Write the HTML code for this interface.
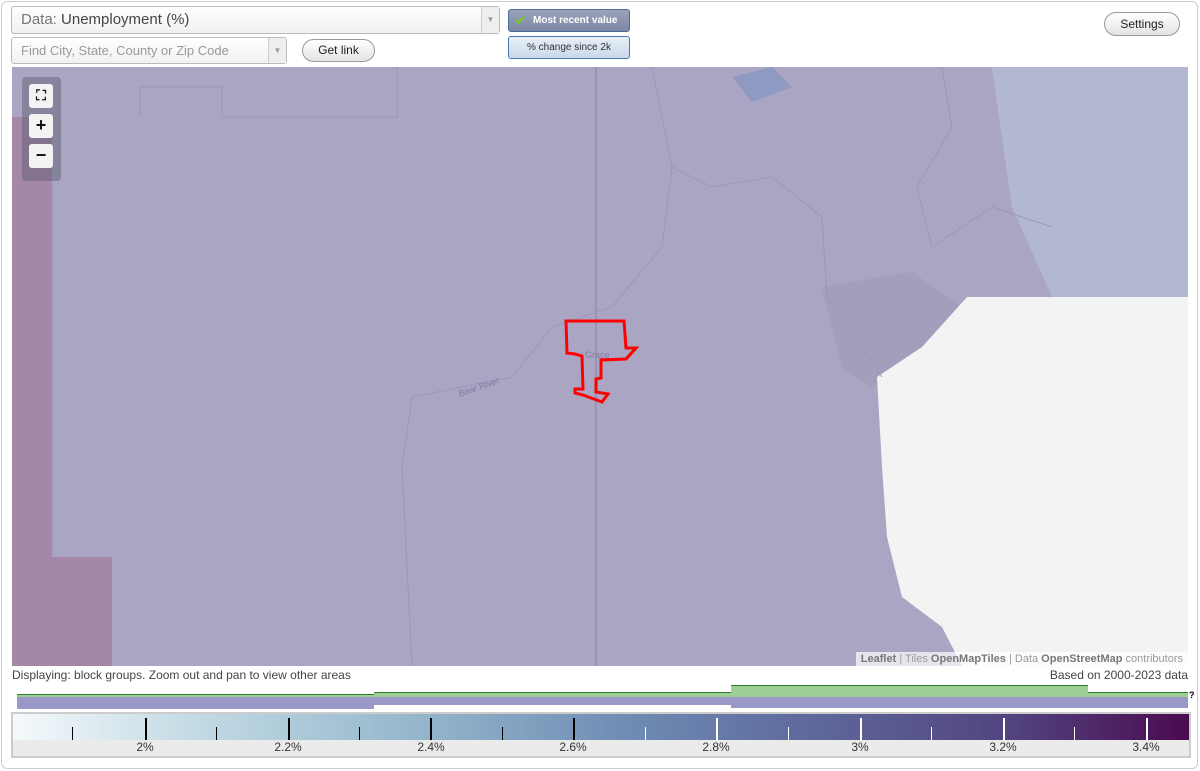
<!DOCTYPE html>
<html><head><style>
*{box-sizing:border-box;margin:0;padding:0}
body{width:1200px;height:771px;background:#fff;font-family:"Liberation Sans",sans-serif;position:relative;overflow:hidden}
.frame{position:absolute;left:1px;top:1px;width:1197px;height:768px;border:1px solid #ccc;border-radius:6px}
.sel{position:absolute;border:1px solid #bbb;border-radius:3px;background:linear-gradient(#fff,#f1f1f1);color:#444}
.arrow{position:absolute;right:0;top:0;bottom:0;width:18px;border-left:1px solid #ccc;background:#eee;color:#999;font-size:8px;text-align:center}
.btn{position:absolute;border:1px solid #999;border-radius:12px;background:linear-gradient(#fff,#e3e3e3);font-size:12px;text-align:center;color:#222}
.ctl{position:absolute;width:24px;height:24px;background:#f3f3f3;border-radius:3px;color:#111;font-weight:bold;text-align:center;font-size:18px;line-height:22px}
.tick{position:absolute;width:1px}
.lab{position:absolute;top:740px;font-size:12px;color:#333;width:40px;text-align:center}
</style></head><body>
<div class="frame"></div>
<div class="sel" style="left:11px;top:6px;width:489px;height:28px;font-size:15px;line-height:26px;padding-left:9px"><span style="color:#777">Data:</span> Unemployment (%)<div class="arrow" style="line-height:26px">▼</div></div>
<div class="sel" style="left:11px;top:37px;width:276px;height:27px;font-size:13px;line-height:25px;padding-left:9px;color:#999">Find City, State, County or Zip Code<div class="arrow" style="line-height:25px">▼</div></div>
<div class="btn" style="left:302px;top:39px;width:73px;height:23px;line-height:21px">Get link</div>
<div style="position:absolute;left:508px;top:9px;width:122px;height:23px;border:1px solid #4a6e9a;border-radius:3px;background:linear-gradient(#9aa3bb,#7d87a4);color:#fff;font-size:10px;font-weight:bold;line-height:21px;padding-left:24px">Most recent value<span style="position:absolute;left:6px;top:0;color:#7c2;font-size:13px">✔</span></div>
<div style="position:absolute;left:508px;top:36px;width:122px;height:23px;border:1px solid #4a7ab0;border-radius:3px;background:linear-gradient(#e8f0f8,#c9d8ea);color:#333;font-size:10px;line-height:21px;text-align:center">% change since 2k</div>
<div class="btn" style="left:1104px;top:12px;width:76px;height:24px;line-height:22px">Settings</div>

<div style="position:absolute;left:12px;top:67px;width:1176px;height:599px;background:#aaa5c3;overflow:hidden">
<svg width="1176" height="599" style="position:absolute;left:0;top:0">
<polygon points="980,0 1176,0 1176,230 1040,230 1000,140" fill="#b3b8d1"/>
<polygon points="0,50 40,50 40,599 0,599" fill="#a587a8"/>
<polygon points="0,490 100,490 100,599 0,599" fill="#a587a8"/>
<polygon points="810,220 900,205 950,240 900,300 860,320 830,300" fill="#a39ebc"/>
<polygon points="955,230 1176,230 1176,599 950,599 930,560 890,530 875,470 870,400 865,310 910,280" fill="#f2f4f4"/>
<polygon points="720,10 760,0 780,20 740,35" fill="#8f9ac2"/>
<line x1="584" y1="0" x2="584" y2="599" stroke="#9893b3" stroke-width="2"/>
<path d="M40,110 L40,490 M128,20 L128,50 M128,20 L210,20 L210,50 L385,50 L385,0" stroke="#9a95b4" fill="none"/>
<path d="M640,0 L660,100 L650,180 L600,240 L540,260 L500,310 L400,330 L390,400 L400,599" stroke="#9c97b8" fill="none"/>
<path d="M660,100 L700,120 L760,110 L810,150 L815,230 L870,310" stroke="#9c97b8" fill="none"/>
<path d="M930,0 L940,60 L905,120 L920,180 L980,140 L1040,160" stroke="#9c97b8" fill="none"/>
<polygon points="554,254 612,254 614,281 624,281 614,292 589,293 589,311 584,312 584,325 596,327 590,335 571,328 563,326 563,322 571,322 570,289 563,287 555,286" fill="none" stroke="#f00" stroke-width="3"/>
<text x="573" y="291" font-size="9" fill="#7f7ba0" font-family="Liberation Sans">Grace</text>
<text x="448" y="330" font-size="9" fill="#7f7ba0" transform="rotate(-20 448 330)" font-family="Liberation Sans">Bear River</text>
</svg>
<div style="position:absolute;left:10px;top:10px;width:39px;height:104px;background:rgba(90,90,110,.45);border-radius:4px"></div>
<div class="ctl" style="left:17px;top:17px;font-size:14px">⛶</div>
<div class="ctl" style="left:17px;top:47px">+</div>
<div class="ctl" style="left:17px;top:77px">−</div>
<div style="position:absolute;right:0;bottom:0;height:14px;background:rgba(255,255,255,.7);font-size:11px;color:#999;padding:0 5px;line-height:14px"><b style="color:#777">Leaflet</b> | Tiles <b style="color:#777">OpenMapTiles</b> | Data <b style="color:#777">OpenStreetMap</b> contributors</div>
</div>
<div style="position:absolute;left:12px;top:668px;font-size:12px;color:#444">Displaying: block groups. Zoom out and pan to view other areas</div>
<div style="position:absolute;right:12px;top:668px;font-size:12px;color:#444">Based on 2000-2023 data</div>

<div style="position:absolute;left:17px;top:694px;width:357px;height:3px;background:#9bcf94;border-top:1.5px solid #2a7a2a"></div>
<div style="position:absolute;left:374px;top:692px;width:357px;height:5px;background:#9bcf94;border-top:1.5px solid #2a7a2a"></div>
<div style="position:absolute;left:731px;top:685px;width:357px;height:12px;background:#9bcf94;border-top:1.5px solid #2a7a2a"></div>
<div style="position:absolute;left:1088px;top:692px;width:100px;height:5px;background:#9bcf94;border-top:1.5px solid #2a7a2a"></div>
<div style="position:absolute;left:17px;top:697px;width:357px;height:12px;background:#9a98c9"></div>
<div style="position:absolute;left:374px;top:697px;width:357px;height:8px;background:#9a98c9"></div>
<div style="position:absolute;left:731px;top:697px;width:457px;height:11px;background:#9a98c9"></div>
<div style="position:absolute;left:1189px;top:690px;font-size:9px;font-weight:bold">?</div>

<div style="position:absolute;left:11px;top:712px;width:1180px;height:46px;border:2px solid #ccc;background:#ebebeb"></div>
<div style="position:absolute;left:13px;top:714px;width:1176px;height:26px;background:linear-gradient(90deg,#f5f9fb,#c4dbe5 15%,#92b5cb 35%,#6f8db4 52%,#5f6a9e 67%,#52437f 85%,#4b0a4f)"></div>
<div class="tick" style="left:72px;top:727px;height:13px;background:#000"></div>
<div class="tick" style="left:145px;top:718px;height:22px;background:#000;width:2px"></div>
<div class="tick" style="left:216px;top:727px;height:13px;background:#000"></div>
<div class="tick" style="left:288px;top:718px;height:22px;background:#000;width:2px"></div>
<div class="tick" style="left:359px;top:727px;height:13px;background:#000"></div>
<div class="tick" style="left:430px;top:718px;height:22px;background:#000;width:2px"></div>
<div class="tick" style="left:502px;top:727px;height:13px;background:#000"></div>
<div class="tick" style="left:573px;top:718px;height:22px;background:#000;width:2px"></div>
<div class="tick" style="left:645px;top:727px;height:13px;background:#fff"></div>
<div class="tick" style="left:716px;top:718px;height:22px;background:#fff;width:2px"></div>
<div class="tick" style="left:788px;top:727px;height:13px;background:#fff"></div>
<div class="tick" style="left:860px;top:718px;height:22px;background:#fff;width:2px"></div>
<div class="tick" style="left:931px;top:727px;height:13px;background:#fff"></div>
<div class="tick" style="left:1003px;top:718px;height:22px;background:#fff;width:2px"></div>
<div class="tick" style="left:1074px;top:727px;height:13px;background:#fff"></div>
<div class="tick" style="left:1146px;top:718px;height:22px;background:#fff;width:2px"></div>
<div class="lab" style="left:125px">2%</div>
<div class="lab" style="left:268px">2.2%</div>
<div class="lab" style="left:411px">2.4%</div>
<div class="lab" style="left:553px">2.6%</div>
<div class="lab" style="left:696px">2.8%</div>
<div class="lab" style="left:840px">3%</div>
<div class="lab" style="left:983px">3.2%</div>
<div class="lab" style="left:1126px">3.4%</div>
</body></html>
